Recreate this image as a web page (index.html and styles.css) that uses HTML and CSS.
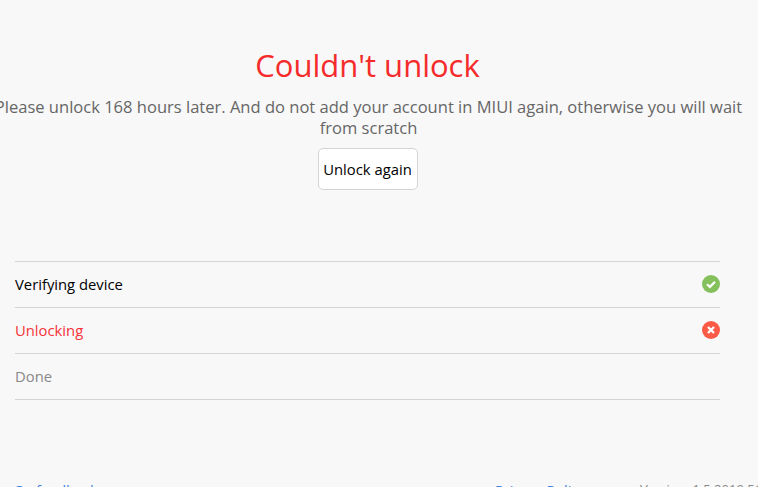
FILE: index.html
```html
<!DOCTYPE html>
<html lang="en">
<head>
    <meta charset="UTF-8">
    <title>Couldn't unlock</title>
    <link rel="stylesheet" href="styles.css">
</head>
<body>
    <div class="page">
        <!-- result -->
        <div class="result">
            <h1 class="title">Couldn't unlock</h1>
            <p class="message">Please unlock 168 hours later. And do not add your account in MIUI again, otherwise you will wait from scratch</p>
            <button class="again-button">Unlock again</button>
        </div>

        <!-- steps -->
        <ul class="steps">
            <li class="step step-ok">
                <span class="step-name">Verifying device</span>
                <svg class="step-icon" viewBox="0 0 18 18">
                    <circle cx="9" cy="9" r="9" fill="#84c05c"/>
                    <path d="M5 9.2l2.9 2.7L13 6.8" fill="none" stroke="#fff" stroke-width="2.2"/>
                </svg>
            </li>
            <li class="step step-fail">
                <span class="step-name">Unlocking</span>
                <svg class="step-icon" viewBox="0 0 18 18">
                    <circle cx="9" cy="9" r="9" fill="#fb5a46"/>
                    <path d="M6 6l6 6M12 6l-6 6" fill="none" stroke="#fff" stroke-width="2.4"/>
                </svg>
            </li>
            <li class="step step-todo">
                <span class="step-name">Done</span>
            </li>
        </ul>

        <!-- footer, cut off by the window -->
        <div class="footer">
            <a class="footer-link" href="#">Go feedback</a>
            <a class="footer-link" href="#">Privacy Policy</a>
            <span class="version">Version: 1.5.2019.51</span>
        </div>
    </div>
</body>
</html>
```

FILE: styles.css
```css
html, body {
    height: 100%;
}

body {
    margin: 0;
    background-color: #f8f8f8;
    font-family: "Open Sans", "Noto Sans", sans-serif;
    overflow: hidden;
}

.page {
    width: 705px;
    padding: 0 22px 0 15px;
}

.result {
    display: flex;
    flex-direction: column;
    align-items: center;
    padding-top: 44px;
}

.title {
    margin: 0;
    font-size: 31px;
    font-weight: 400;
    line-height: 43px;
    color: #f52b2b;
}

/* wider than the page, the first letter runs off the left edge */
.message {
    width: 762px;
    margin: 9px -40px 0 -38px;
    flex-shrink: 0;
    font-size: 16.55px;
    line-height: 21px;
    text-align: center;
    color: #666;
}

.again-button {
    width: 100px;
    height: 42px;
    margin-top: 10px;
    padding: 0;
    background-color: #fff;
    border: 1px solid #d4d4d4;
    border-radius: 5px;
    font-family: inherit;
    font-size: 14.8px;
    color: #000;
}

.steps {
    margin: 71px 0 0;
    padding: 0;
    list-style: none;
    border-top: 1px solid #d4d4d4;
}

.step {
    display: flex;
    justify-content: space-between;
    align-items: center;
    height: 45px;
    border-bottom: 1px solid #d4d4d4;
    font-size: 14.8px;
}

.step-name {
    margin-top: -2px;
}

.step-ok {
    color: #000;
}

.step-fail {
    color: #f6323a;
}

.step-todo {
    color: #888;
}

.step-icon {
    width: 18px;
    height: 18px;
    margin-top: -1px;
}

.footer {
    display: grid;
    grid-template-columns: 482px 145px auto;
    margin: 81px 0 0 -2px;
    font-size: 14.5px;
    line-height: 20px;
    white-space: nowrap;
}

.footer-link {
    color: #3f7fe0;
    text-decoration: none;
}

.version {
    font-size: 13px;
    line-height: 17px;
    color: #888;
}
```
